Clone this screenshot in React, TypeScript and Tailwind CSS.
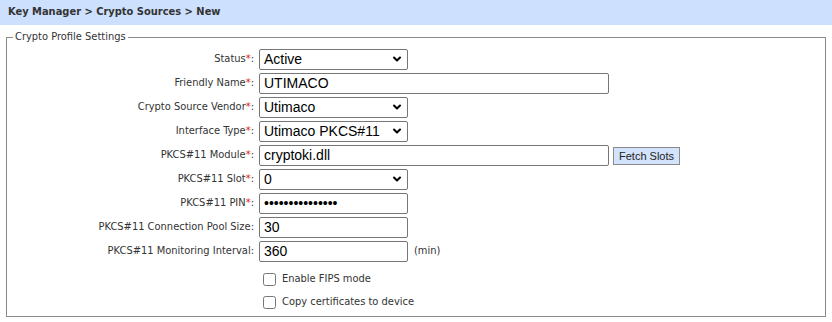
import { ChevronDown } from 'lucide-react'

const LABEL = "font-['DejaVu_Sans_Condensed','DejaVu_Sans',sans-serif] text-[11px] text-[#333]"
const FIELD = "h-[21px] border border-[#767676] rounded-[2px] bg-white px-[4px] font-['Liberation_Sans',Arial,sans-serif] text-[14px] text-black outline-none"

function Row({ label, req, children }: { label: string; req?: boolean; children: React.ReactNode }) {
  return (
    <div className="flex items-center h-[24px]">
      <div className={`w-[252px] text-right pr-[5px] ${LABEL}`}>
        {label}
        {req && <span className="text-[#e02020]">*</span>}:
      </div>
      {children}
    </div>
  )
}

function Select({ value, width = 'w-[149px]' }: { value: string; width?: string }) {
  return (
    <div className={`relative ${width}`}>
      <div className={`${FIELD} flex items-center`}>{value}</div>
      <ChevronDown size={12} strokeWidth={4} className="absolute right-[5px] top-[4px] text-black" />
    </div>
  )
}

export default function App() {
  return (
    <div className="w-[832px] h-[322px] bg-white">
      {/* breadcrumb */}
      <div className={`h-[25px] bg-[#cde0fd] flex items-center pl-[8px] font-bold ${LABEL} text-[#111]`}>
        Key Manager &gt; Crypto Sources &gt; New
      </div>

      <fieldset className="mx-[6px] mt-[4px] border border-[#8a8a8a] h-[288px] px-0 pt-[2px]">
        <legend className={`ml-[6px] px-[2px] ${LABEL} text-[#222]`}>Crypto Profile Settings</legend>

        <Row label="Status" req>
          <Select value="Active" />
        </Row>
        <Row label="Friendly Name" req>
          <input className={`${FIELD} w-[350px]`} defaultValue="UTIMACO" />
        </Row>
        <Row label="Crypto Source Vendor" req>
          <Select value="Utimaco" />
        </Row>
        <Row label="Interface Type" req>
          <Select value="Utimaco PKCS#11" />
        </Row>
        <Row label="PKCS#11 Module" req>
          <input className={`${FIELD} w-[350px] bg-[#e8f0fe]`} defaultValue="cryptoki.dll" />
          <button className="ml-[4px] h-[18px] w-[67px] border border-[#8a8a8a] bg-[#d3e3fb] font-['Liberation_Sans',Arial,sans-serif] text-[11px] text-[#222]">
            Fetch Slots
          </button>
        </Row>
        <Row label="PKCS#11 Slot" req>
          <Select value="0" />
        </Row>
        <Row label="PKCS#11 PIN" req>
          <input type="password" className={`${FIELD} w-[149px] text-[11px]`} defaultValue="xxxxxxxxxxxxxxx" />
        </Row>
        <Row label="PKCS#11 Connection Pool Size">
          <input className={`${FIELD} w-[149px]`} defaultValue="30" />
        </Row>
        <Row label="PKCS#11 Monitoring Interval">
          <input className={`${FIELD} w-[149px]`} defaultValue="360" />
          <span className={`ml-[6px] ${LABEL}`}>(min)</span>
        </Row>

        <div className="pl-[256px] pt-[4px] flex flex-col">
          <label className={`flex items-center gap-[6px] h-[23px] ${LABEL}`}>
            <input type="checkbox" className="w-[13px] h-[13px] m-0" />
            Enable FIPS mode
          </label>
          <label className={`flex items-center gap-[6px] h-[23px] ${LABEL}`}>
            <input type="checkbox" className="w-[13px] h-[13px] m-0" />
            Copy certificates to device
          </label>
        </div>
      </fieldset>
    </div>
  )
}
